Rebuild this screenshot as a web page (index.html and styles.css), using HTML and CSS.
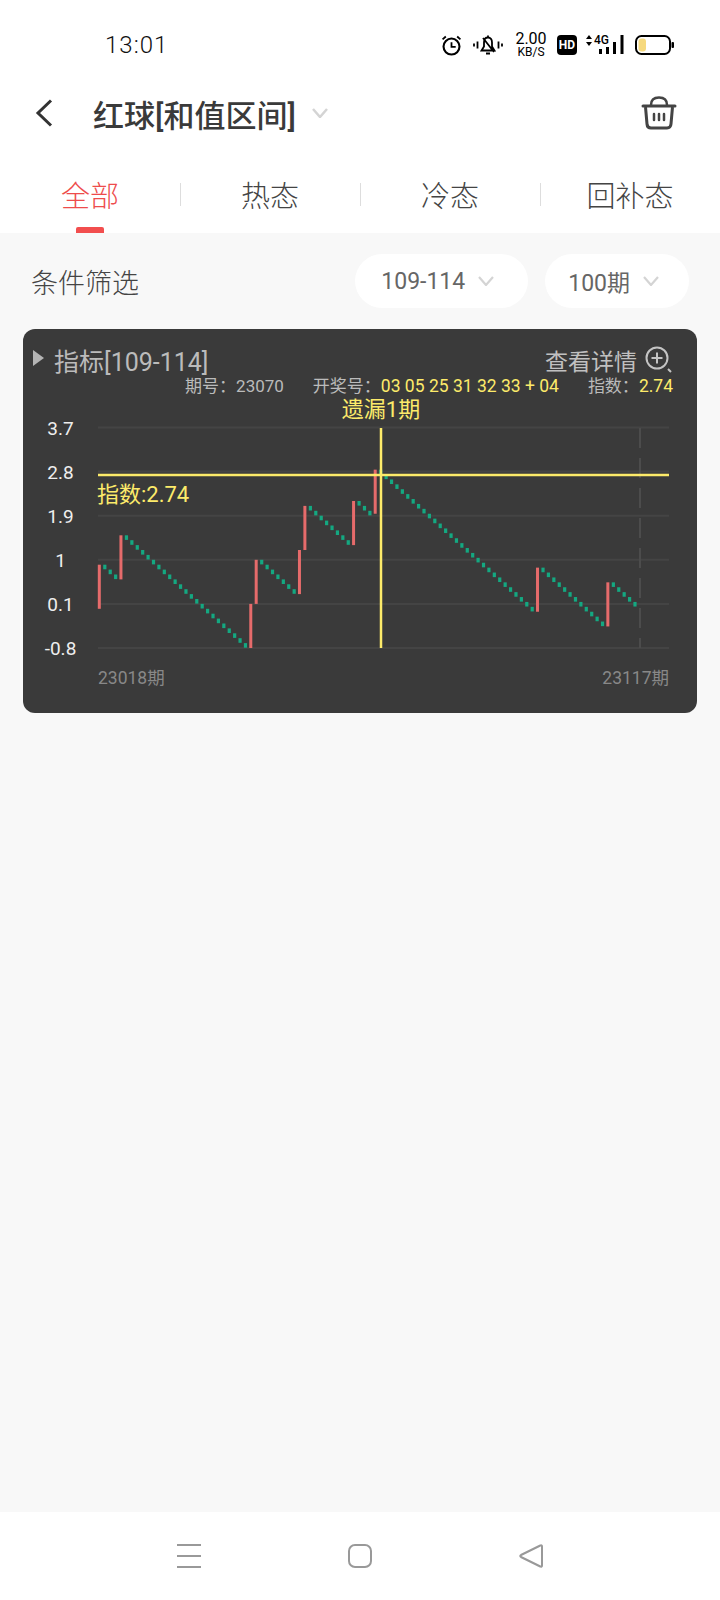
FILE: index.html
```html
<!DOCTYPE html>
<html lang="zh-CN">
<head>
    <meta charset="UTF-8">
    <meta name="viewport" content="width=device-width, initial-scale=1.0">
    <title>红球[和值区间]</title>
    <link rel="stylesheet" href="styles.css">
</head>
<body>
    <div class="top">
        <!-- Status bar -->
        <div class="status">
            <span class="time">13:01</span>
            <div class="status-icons">
                <svg class="ic-alarm" width="21" height="21" viewBox="0 0 20 20">
                    <circle cx="10" cy="11" r="7.6" fill="none" stroke="#000" stroke-width="2"/>
                    <path d="M10 6.8V11.4H14M1.5 4.2 4.6 1.4M18.5 4.2 15.4 1.4" fill="none" stroke="#000" stroke-width="1.7"/>
                </svg>
                <svg class="ic-bell" width="30" height="20" viewBox="0 0 30 20">
                    <path d="M1 8.5v3M4.5 6.5v7M25.500 6.500v7M29 8.500v3" stroke="#000" stroke-width="1.800" fill="none"/>
                    <path d="M8.500 15.500h13L19 11.500V7.500C19 4.500 17.500 2.500 15 2.500S11 4.500 11 7.500V11.500ZM13 18.500h4M15 .5V2.500M10 3 21 17" fill="none" stroke="#000" stroke-width="1.800"/>
                </svg>
                <div class="speed"><b>2.00</b><span>KB/S</span></div>
                <span class="hd">HD</span>
                <div class="signal">
                    <svg width="6" height="11" viewBox="0 0 6 11"><path d="M3 0 6 4H0ZM3 11 0 7H6Z" fill="#000"/></svg>
                    <span class="net">4G</span>
                    <svg class="bars" width="25" height="20" viewBox="0 0 25 20">
                        <path d="M0 14h3v5H0ZM7 12h3v7H7ZM14 7h3v12h-3ZM21.500 0h3v19h-3Z" fill="#000"/>
                    </svg>
                </div>
                <svg class="battery" width="39" height="20" viewBox="0 0 39 20">
                    <rect x="1" y="1" width="34" height="18" rx="5.500" fill="#fff" stroke="#000" stroke-width="2"/>
                    <rect x="3.500" y="3.500" width="7.500" height="13" rx="3" fill="#f6d97e"/>
                    <rect x="36.500" y="7" width="2.500" height="6" rx="1" fill="#000"/>
                </svg>
            </div>
        </div>

        <!-- Title -->
        <header class="nav">
            <svg class="back" width="18" height="28" viewBox="0 0 18 28"><path d="M16 1.500 3 14 16 26.500" fill="none" stroke="#333" stroke-width="3"/></svg>
            <h1>红球[和值区间]</h1>
            <svg class="caret title-caret" width="16" height="10" viewBox="0 0 16 10"><path d="M1 1 8 9 15 1" fill="none" stroke="#d4d4d4" stroke-width="2.500"/></svg>
            <svg class="basket" width="36" height="34" viewBox="0 0 36 34">
                <path d="M10 9C10 4 13 1.500 18 1.500S26 4 26 9" fill="none" stroke="#444" stroke-width="2.500"/>
                <path d="M2 10H34" stroke="#444" stroke-width="3" stroke-linecap="round"/>
                <path d="M4.500 11 6 28C6.200 30.800 8 32 10 32H26C28 32 29.800 30.800 30 28L31.500 11" fill="none" stroke="#444" stroke-width="3"/>
                <path d="M13 18v6M18 18v6M23 18v6" stroke="#444" stroke-width="2.500" stroke-linecap="round"/>
            </svg>
        </header>

        <!-- Tabs -->
        <div class="tabs">
            <div class="tab active">全部</div>
            <div class="tab">热态</div>
            <div class="tab">冷态</div>
            <div class="tab">回补态</div>
        </div>
    </div>

    <main class="content">
        <div class="filter">
            <span class="filter-label">条件筛选</span>
            <div class="pills">
                <div class="pill">109-114<svg class="caret" width="16" height="10" viewBox="0 0 16 10"><path d="M1 1 8 9 15 1" fill="none" stroke="#d4d4d4" stroke-width="2.200"/></svg></div>
                <div class="pill pill-short">100期<svg class="caret" width="16" height="10" viewBox="0 0 16 10"><path d="M1 1 8 9 15 1" fill="none" stroke="#d4d4d4" stroke-width="2.200"/></svg></div>
            </div>
        </div>

        <section class="card">
            <div class="card-head">
                <div class="card-title"><i class="arrow"></i>指标[109-114]</div>
                <div class="detail">查看详情
                    <svg width="29" height="29" viewBox="0 0 29 29">
                        <circle cx="13" cy="12" r="10.500" fill="none" stroke="#c4c4c4" stroke-width="2"/>
                        <path d="M13 6.500v11M7.500 12h11M24 23l3 3" fill="none" stroke="#c4c4c4" stroke-width="2"/>
                    </svg>
                </div>
            </div>
            <div class="info">
                <span>期号：23070</span>
                <span>开奖号：<em>03 05 25 31 32 33 + 04</em></span>
                <span>指数：<em>2.74</em></span>
            </div>
            <!-- viewBox uses page coordinates so the chart numbers read straight off the screenshot -->
            <svg id="chart" class="chart" width="674" height="316" viewBox="23 396 674 316">
                <g id="grid"></g>
                <line class="future" x1="640" y1="428" x2="640" y2="648"/>
                <g id="candles"></g>
                <line class="cross" x1="98" y1="475" x2="669" y2="475"/>
                <line class="cross" x1="381" y1="428" x2="381" y2="648"/>
                <text class="miss" x="381" y="417" text-anchor="middle">遗漏1期</text>
                <text class="value" x="97" y="502">指数:2.74</text>
                <text class="period" x="98" y="684">23018期</text>
                <text class="period" x="669" y="684" text-anchor="end">23117期</text>
            </svg>
        </section>
    </main>

    <!-- System navigation -->
    <footer class="sysnav">
        <svg width="26" height="26" viewBox="0 0 26 26"><path d="M1 2h24M1 13h24M1 24h24" stroke="#999" stroke-width="2"/></svg>
        <svg width="26" height="26" viewBox="0 0 26 26"><rect x="2" y="2" width="22" height="22" rx="6" fill="none" stroke="#999" stroke-width="2"/></svg>
        <svg width="26" height="26" viewBox="0 0 26 26"><path d="M24 3.500C24 2.500 23.200 2 22.300 2.500L3 12C2 12.600 2 13.400 3 14L22.300 23.500C23.200 24 24 23.500 24 22.500Z" fill="none" stroke="#999" stroke-width="2"/></svg>
    </footer>

    <script src="script.js"></script>
</body>
</html>
```

FILE: styles.css
```css
/* General Reset */
* {
    box-sizing: border-box;
    margin: 0;
    padding: 0;
}

body {
    display: flex;
    flex-direction: column;
    height: 1600px;
    font-family: Roboto, "Noto Sans CJK SC", sans-serif;
    background-color: #f8f8f8;
    color: #333;
}

.top {
    background-color: #fff;
}

/* Status bar */
.status {
    display: flex;
    justify-content: space-between;
    align-items: center;
    height: 90px;
    padding: 0 46px 0 105px;
}

.time {
    font-size: 24px;
    font-weight: 300;
    letter-spacing: 1px;
    color: #111;
}

.status-icons {
    display: flex;
    align-items: center;
}

.ic-bell {
    margin-left: 11px;
}

.speed {
    display: flex;
    flex-direction: column;
    align-items: center;
    width: 34px;
    margin-left: 11px;
    color: #000;
}

.speed b {
    font-size: 16px;
    font-weight: 400;
    line-height: 14px;
}

.speed span {
    margin-top: 1px;
    font-size: 12px;
    line-height: 11px;
}

.hd {
    width: 20px;
    height: 20px;
    margin-left: 9px;
    border-radius: 4px;
    background-color: #000;
    color: #fff;
    font-size: 12px;
    font-weight: 700;
    line-height: 20px;
    text-align: center;
}

.signal {
    position: relative;
    display: flex;
    align-items: flex-start;
    width: 38px;
    height: 20px;
    margin-left: 9px;
}

.net {
    margin-left: 2px;
    font-size: 12px;
    font-weight: 500;
    line-height: 11px;
    color: #000;
}

.bars {
    position: absolute;
    left: 13px;
    top: 0;
}

.battery {
    margin-left: 11px;
}

/* Title row */
.nav {
    display: flex;
    align-items: center;
    height: 46px;
    padding: 0 43px 0 35px;
}

.nav h1 {
    margin-left: 40px;
    font-size: 31px;
    font-weight: 500;
    color: #3a3a3a;
}

.title-caret {
    margin-left: 16px;
}

.basket {
    margin-left: auto;
}

/* Tabs */
.tabs {
    display: grid;
    grid-template-columns: repeat(4, 180px);
    height: 97px;
}

.tab {
    position: relative;
    padding-top: 40px;
    font-size: 29px;
    font-weight: 300;
    line-height: 42px;
    text-align: center;
    color: #444;
}

.tab + .tab::before {
    content: "";
    position: absolute;
    left: 0;
    top: 47px;
    width: 1px;
    height: 23px;
    background-color: #ddd;
}

.tab.active {
    color: #ee4c4c;
}

.tab.active::after {
    content: "";
    position: absolute;
    left: 76px;
    bottom: 0;
    width: 28px;
    height: 6px;
    border-radius: 2px 2px 0 0;
    background-color: #f24e4e;
}

/* Filter row */
.content {
    flex: 1;
}

.filter {
    display: flex;
    justify-content: space-between;
    align-items: center;
    height: 96px;
    padding: 0 31px;
}

.filter-label {
    font-size: 27px;
    font-weight: 300;
    color: #444;
}

.pills {
    display: flex;
    gap: 17px;
}

.pill {
    display: flex;
    align-items: center;
    gap: 13px;
    height: 54px;
    padding: 0 34px 0 26px;
    border-radius: 27px;
    background-color: #fff;
    font-size: 23px;
    color: #666;
}

.pill-short {
    padding: 0 30px 0 23px;
}

/* Chart card */
.card {
    height: 384px;
    margin: 0 23px;
    padding-top: 17px;
    border-radius: 12px;
    background-color: #3a3a3a;
    overflow: hidden;
}

.card-head {
    display: flex;
    justify-content: space-between;
    align-items: center;
    height: 28px;
    padding: 0 24px 0 10px;
}

.card-title {
    display: flex;
    align-items: center;
    font-size: 25px;
    color: #bbb;
}

.arrow {
    width: 0;
    height: 0;
    margin-right: 10px;
    margin-top: -4px;
    border-left: 11px solid #b4b4b4;
    border-top: 8px solid transparent;
    border-bottom: 8px solid transparent;
}

.detail {
    display: flex;
    align-items: center;
    gap: 7px;
    font-size: 23px;
    color: #c0c0c0;
}

.info {
    display: flex;
    justify-content: flex-end;
    gap: 29px;
    height: 20px;
    margin-top: 2px;
    padding-right: 24px;
    font-size: 17px;
    line-height: 20px;
    color: #bbb;
}

.info em {
    font-size: 17.500px;
    font-style: normal;
    color: #fdeb6a;
}

.chart {
    display: block;
}

.grid-line {
    stroke: #444;
    stroke-width: 2;
}

.future {
    stroke: #4c4c4c;
    stroke-width: 2;
    stroke-dasharray: 20 10;
}

.cross {
    stroke: #fdeb6a;
    stroke-width: 2.500;
}

.y-label {
    font-size: 19px;
    fill: #eee;
}

.miss,
.value {
    font-size: 22px;
    fill: #fdeb6a;
}

.period {
    font-size: 17.500px;
    fill: #888;
}

.up {
    fill: #e66b6b;
}

.down {
    fill: #14a881;
}

/* System navigation */
.sysnav {
    display: flex;
    justify-content: space-between;
    align-items: center;
    height: 88px;
    padding: 0 176px;
    background-color: #fff;
}
```

FILE: script.js
```js
// Chart scale, taken from the gridlines
const LEFT = 99.3;
const STEP = 5.41;
const BOTTOM = 648;
const PX_PER_UNIT = 49;
const NS = 'http://www.w3.org/2000/svg';

function yOf(value) {
    return BOTTOM - (value + 0.8) * PX_PER_UNIT;
}

function add(parent, tag, attrs) {
    const el = document.createElementNS(NS, tag);
    Object.keys(attrs).forEach((key) => el.setAttribute(key, attrs[key]));
    parent.appendChild(el);
    return el;
}

// Gridlines and y labels
const grid = document.getElementById('grid');
['3.7', '2.8', '1.9', '1', '0.1', '-0.8'].forEach((label) => {
    const y = yOf(parseFloat(label));
    add(grid, 'line', { class: 'grid-line', x1: 98, x2: 669, y1: y, y2: y });
    const text = add(grid, 'text', { class: 'y-label', x: 60.500, y: y + 7, 'text-anchor': 'middle' });
    text.textContent = label;
});

// Period index -> start value of each hit; every other period drops by 0.1
const hits = { 0: 0, 4: 0.6, 28: -0.8, 29: 0.1, 37: 0.3, 38: 1.2, 47: 1.3, 51: 1.94, 81: -0.06, 94: -0.36 };
const candles = document.getElementById('candles');
let value = 0;
for (let i = 0; i < 100; i++) {
    const x = LEFT + STEP * i - 1.5;
    if (i in hits) {
        value = hits[i] + 0.9;
        add(candles, 'rect', { class: 'up', x: x, y: yOf(value), width: 3, height: 0.9 * PX_PER_UNIT });
    } else {
        add(candles, 'rect', { class: 'down', x: x, y: yOf(value), width: 3.2, height: 4.6 });
        value -= 0.1;
    }
}
```
